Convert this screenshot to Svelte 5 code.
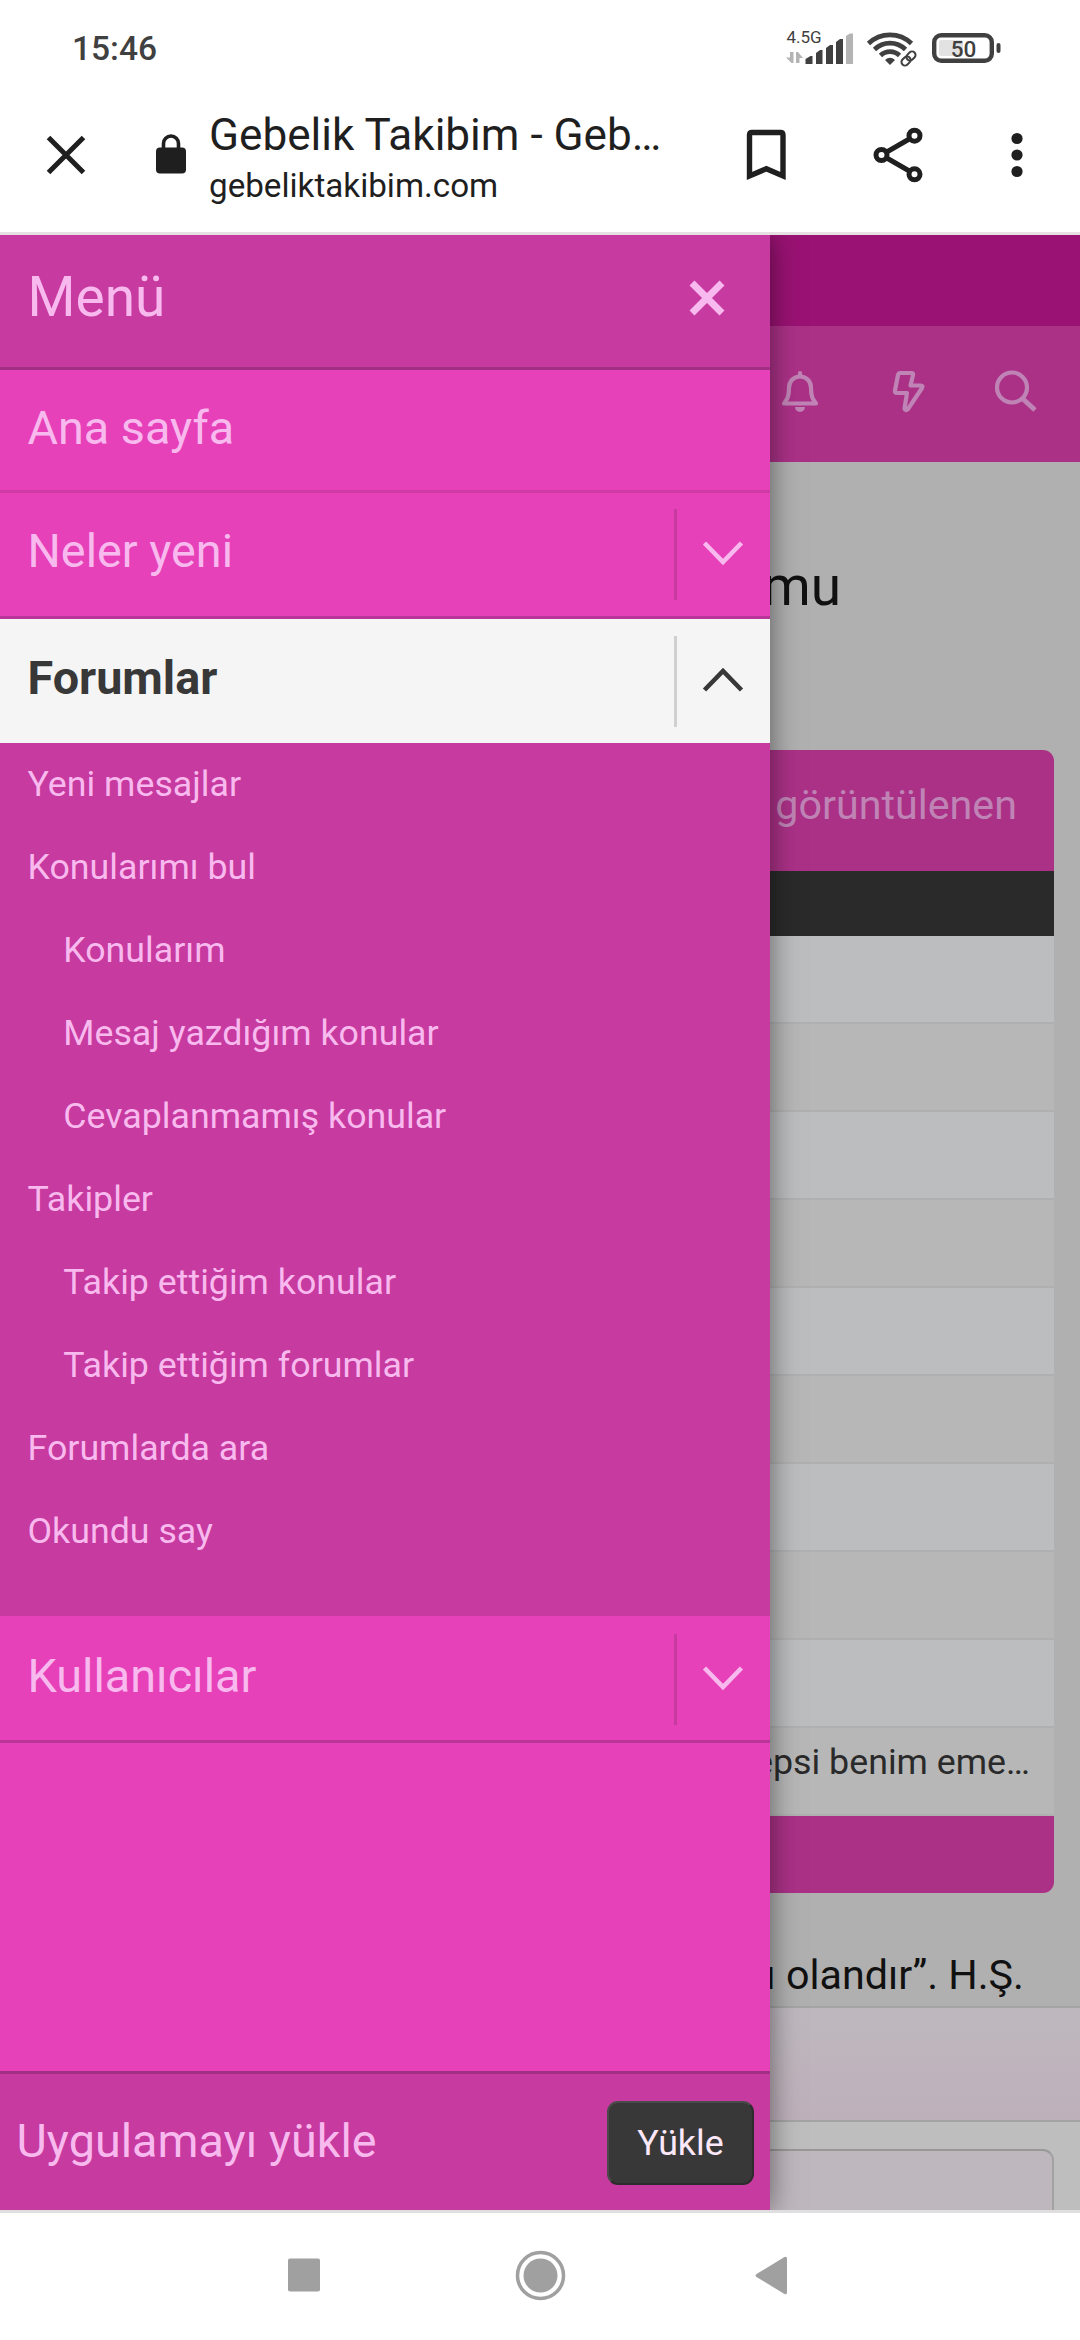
<script>
  const menuTop = [
    { label: "Ana sayfa" },
    { label: "Neler yeni", toggle: true },
    { label: "Forumlar", toggle: true, open: true },
  ];

  const subMenu = [
    { label: "Yeni mesajlar" },
    { label: "Konularımı bul" },
    { label: "Konularım", indent: true },
    { label: "Mesaj yazdığım konular", indent: true },
    { label: "Cevaplanmamış konular", indent: true },
    { label: "Takipler" },
    { label: "Takip ettiğim konular", indent: true },
    { label: "Takip ettiğim forumlar", indent: true },
    { label: "Forumlarda ara" },
    { label: "Okundu say" },
  ];

  const rows = ["", "", "", "", "", "", "", "", "", "hepsi benim eme…"];
</script>

{#snippet chevron(open)}
  <span class="toggle">
    <svg width="42" height="26" viewBox="0 0 42 26">
      <path d={open ? "M2.5 23 21 4 39.5 23" : "M2.5 3 21 22 39.5 3"} fill="none" stroke="currentColor" stroke-width="4.6" />
    </svg>
  </span>
{/snippet}

<div class="phone">
  <header class="status">
    <span class="clock">15:46</span>
    <svg class="status-icons" width="230" height="46" viewBox="780 25 230 46">
      <text x="786.5" y="43" font-size="17" fill="#404040">4.5G</text>
      <g fill="#b4b4b4">
        <path d="M790 52h3.500v11h-2l-5.500-5.500h4z" />
        <path d="M796 52h2l5 6h-3.500v5h-3.500z" />
        <path d="M846 36l4-2.500h3V64h-7z" />
      </g>
      <g fill="#404040">
        <path d="M805.500 59l5-3h2v8h-7z" />
        <path d="M816 53l4-3h2.500v14H816z" />
        <path d="M826 48l4-3h3v19h-7z" />
        <path d="M836 42l4-3h3v25h-7z" />
        <path d="M885.500 59.500a6.500 6.500 0 0 1 9 0v1L890 65l-4.500-4.500z" />
        <rect x="996.500" y="43" width="4" height="10" rx="2" />
      </g>
      <g fill="none" stroke="#404040" stroke-width="4.700">
        <path d="M868.500 43.500a31 31 0 0 1 43 0" />
        <path d="M874.500 49.500a22 22 0 0 1 31 0" />
        <path d="M880.500 55.500a13.500 13.500 0 0 1 19 0" />
      </g>
      <g transform="rotate(-45 908.5 58.5)">
        <g fill="#fff" stroke="#fff" stroke-width="5">
          <rect x="900" y="55" width="10" height="7" rx="3.500" />
          <rect x="907" y="55" width="10" height="7" rx="3.500" />
        </g>
        <g fill="none" stroke="#404040" stroke-width="2">
          <rect x="900" y="55" width="10" height="7" rx="3.500" />
          <rect x="907" y="55" width="10" height="7" rx="3.500" />
        </g>
      </g>
      <rect x="934.200" y="35.200" width="57.600" height="25.600" rx="7" fill="none" stroke="#404040" stroke-width="4.400" />
      <rect x="939" y="40" width="24" height="16" rx="2" fill="#e2e2e2" />
      <text x="963.500" y="57" font-size="22.500" font-weight="500" text-anchor="middle" fill="#404040">50</text>
    </svg>
  </header>

  <div class="toolbar">
    <svg class="tb-close" width="40" height="40" viewBox="0 0 40 40">
      <path d="M2.500 2.500l35 35M37.500 2.500l-35 35" stroke="#1f1f1f" stroke-width="5" />
    </svg>
    <svg class="tb-lock" width="30" height="40" viewBox="0 0 30 40">
      <rect y="13.500" width="30" height="26" rx="4" fill="#1f1f1f" />
      <path d="M7.500 15V9.500a7.500 7.500 0 0 1 15 0V15" fill="none" stroke="#1f1f1f" stroke-width="3.600" />
    </svg>
    <div class="tb-text">
      <div class="tb-title">Gebelik Takibim - Geb…</div>
      <div class="tb-url">gebeliktakibim.com</div>
    </div>
    <svg class="tb-icons" width="290" height="60" viewBox="740 125 290 60">
      <path d="M749.500 176V135q0-2.500 2.500-2.500h28.500q2.500 0 2.500 2.500v41l-16.700-7.200z" fill="none" stroke="#1f1f1f" stroke-width="5.400" />
      <g fill="none" stroke="#1f1f1f" stroke-width="5">
        <path d="M914.500 136l-33 19 33 19" />
        <g fill="#fff">
          <circle cx="914.500" cy="135.700" r="5.500" />
          <circle cx="881.500" cy="155" r="5.500" />
          <circle cx="914.500" cy="174.300" r="5.500" />
        </g>
      </g>
      <g fill="#1f1f1f">
        <circle cx="1017" cy="138.500" r="5.600" />
        <circle cx="1017" cy="155" r="5.600" />
        <circle cx="1017" cy="171.500" r="5.600" />
      </g>
    </svg>
  </div>

  <main>
    <div class="page">
      <div class="page-top"></div>
      <div class="page-nav">
        <svg width="260" height="46" viewBox="780 368 260 46" fill="none" stroke="#bf84b5" stroke-width="4.200" stroke-linejoin="round" stroke-linecap="round">
          <path d="M800 373v2M800 376.500c-6.500 0-11 5-11 11.500 0 9-2 11.500-5 15.500h32c-3-4-5-6.500-5-15.500 0-6.500-4.500-11.500-11-11.500z" />
          <path d="M795 407h10a5 5 0 0 1-10 0z" fill="#bf84b5" stroke="none" />
          <path d="M900 373h11.500q2 0 1.500 2l-2.500 10.500h10q3 0 1.500 2.500l-14 21q-2.500 2.500-3.500-.500l2.500-15.500h-10q-2.500 0-2-2.500l3-15.500q.500-2 2-2z" />
          <circle cx="1012" cy="387.500" r="15" />
          <path d="M1023 399l12 11" stroke-linecap="butt" stroke-width="5" />
        </svg>
      </div>
      <h1>Gebelik Forumu</h1>
      <section class="card">
        <div class="card-head">En çok görüntülenen</div>
        <div class="card-dark"></div>
        {#each rows as row}
          <div class="card-row">{row}</div>
        {/each}
        <div class="card-foot"></div>
      </section>
      <p class="quote">hayırlı olandır”. H.Ş.</p>
      <div class="band"></div>
      <div class="box-area"><div class="box"></div></div>
    </div>

    <aside class="drawer">
      <div class="menu-head">
        <span>Menü</span>
        <svg width="36" height="36" viewBox="0 0 36 36">
          <path d="M3 3l30 30M33 3L3 33" stroke="#f8b9ee" stroke-width="7" />
        </svg>
      </div>
      {#each menuTop as item}
        <div class="item" class:open={item.open} class:tall={item.toggle}>
          <span>{item.label}</span>
          {#if item.toggle}{@render chevron(item.open)}{/if}
        </div>
      {/each}
      <ul>
        {#each subMenu as sub}
          <li class:indent={sub.indent}>{sub.label}</li>
        {/each}
      </ul>
      <div class="item tall last">
        <span>Kullanıcılar</span>
        {@render chevron(false)}
      </div>
      <div class="install">
        <span>Uygulamayı yükle</span>
        <button>Yükle</button>
      </div>
    </aside>
  </main>

  <nav class="android">
    <svg width="520" height="60" viewBox="280 2245 520 60" fill="#a0a0a0">
      <rect x="288" y="2258.500" width="32" height="33" rx="2" />
      <circle cx="540.500" cy="2275.500" r="17" />
      <circle cx="540.500" cy="2275.500" r="23" fill="none" stroke="#a0a0a0" stroke-width="3.500" />
      <path d="M756.500 2274l28-17q2.500-1 2.500 2v33q0 3-2.500 2l-28-17q-2-1.500 0-3z" />
    </svg>
  </nav>
</div>

<style>
  :global(body) {
    background: #fff;
  }
  .phone {
    width: 1080px;
    height: 2340px;
    display: flex;
    flex-direction: column;
    overflow: hidden;
    font-family: Roboto, "Liberation Sans", sans-serif;
    color: #1f1f1f;
  }
  .phone * {
    box-sizing: border-box;
  }
  svg {
    display: block;
    flex: none;
  }
  .status {
    height: 98px;
    display: flex;
    justify-content: space-between;
    padding: 25px 70px 0 72px;
  }
  .clock {
    font-size: 33.5px;
    font-weight: 500;
    line-height: 48px;
    color: #404040;
  }
  .toolbar {
    height: 137px;
    display: flex;
    align-items: flex-start;
    border-bottom: 3px solid #e6dfe4;
  }
  .tb-close {
    margin: 37px 0 0 46px;
  }
  .tb-lock {
    margin: 36px 0 0 70px;
  }
  .tb-text {
    width: 530px;
    margin-left: 23px;
    white-space: nowrap;
  }
  .tb-title {
    font-size: 44.1px;
    line-height: 52px;
    margin-top: 11px;
  }
  .tb-url {
    font-size: 33.2px;
    line-height: 40px;
    margin-top: 5px;
  }
  .tb-icons {
    margin: 27px 0 0 1px;
  }
  main {
    position: relative;
    height: 1975px;
    overflow: hidden;
  }
  .page {
    height: 100%;
    background: #b0b0b0;
  }
  .page-top {
    height: 91px;
    background: #9a1273;
  }
  .page-nav {
    height: 136px;
    padding: 42px 40px 0 0;
    display: flex;
    justify-content: flex-end;
    background: #ab3187;
  }
  h1 {
    height: 288px;
    margin: 0;
    padding: 91px 239px 0 0;
    font-size: 55px;
    font-weight: 400;
    line-height: 66px;
    text-align: right;
    color: #111;
  }
  .card {
    width: 1027px;
    margin-left: 27px;
    border-radius: 11px;
    overflow: hidden;
  }
  .card-head {
    height: 121px;
    padding: 29px 37px 0 0;
    font-size: 41.25px;
    line-height: 52px;
    text-align: right;
    color: #bf84b5;
    background: #ab3187;
  }
  .card-dark {
    height: 65px;
    background: #2a2a2a;
  }
  .card-row {
    height: 88px;
    padding: 12px 24px 0 0;
    font-size: 35.75px;
    line-height: 44px;
    text-align: right;
    color: #2a2a2a;
    background: #bbbdbf;
    border-bottom: 2px solid #b0b0b0;
  }
  .card-row:nth-child(even) {
    background: #b7b7b7;
  }
  .card-foot {
    height: 77px;
    background: #ab3187;
  }
  .quote {
    height: 113px;
    margin: 0;
    padding: 54px 56px 0 0;
    font-size: 41.25px;
    line-height: 56px;
    text-align: right;
    color: #111;
  }
  .band {
    height: 116px;
    border: solid #a5a4a5;
    border-width: 2px 0;
    background: linear-gradient(#beb8be, #beb0bb);
  }
  .box-area {
    height: 100px;
    padding: 27px 26px 0;
    background: #bebebe;
  }
  .box {
    height: 100px;
    border: 2px solid #a2a2a2;
    border-top-color: #989898;
    border-radius: 11px;
    background: #beb7be;
  }
  /* slides over the page */
  .drawer {
    position: absolute;
    inset: 0 auto 0 0;
    width: 770px;
    display: flex;
    flex-direction: column;
    background: #e741b9;
    color: #f8b9ee;
    box-shadow: 0 0 27px rgba(0, 0, 0, 0.5);
  }
  .menu-head {
    height: 135px;
    display: flex;
    justify-content: space-between;
    padding: 29px 45px 0 27.5px;
    font-size: 55px;
    line-height: 66px;
    background: #c73a9f;
    border-bottom: 3px solid #a13085;
  }
  .menu-head svg {
    margin-top: 16px;
  }
  .item {
    height: 123px;
    display: flex;
    justify-content: space-between;
    padding-left: 27.5px;
    border-bottom: 3px solid #cf3aa6;
    font-size: 46.75px;
    line-height: 116px;
  }
  .item.tall {
    height: 126px;
    border-bottom-color: #b9359a;
  }
  .item.open {
    height: 124px;
    border-bottom: 0;
    line-height: 118px;
    font-weight: 700;
    color: #383838;
    background: #f5f5f5;
  }
  .item.last {
    height: 127px;
    line-height: 120px;
  }
  .toggle {
    width: 96px;
    height: 91px;
    margin-top: 16px;
    display: flex;
    align-items: flex-start;
    padding: 31px 0 0 25px;
    border-left: 3px solid #c73a9f;
  }
  .open .toggle {
    margin-top: 17px;
    border-left-color: #d0d0d0;
  }
  .last .toggle {
    margin-top: 18px;
  }
  ul {
    height: 873px;
    margin: 0;
    padding: 0;
    list-style: none;
    background: #c73a9f;
  }
  li {
    height: 83px;
    padding-left: 27.5px;
    font-size: 35.75px;
    line-height: 83px;
  }
  li.indent {
    padding-left: 63.25px;
  }
  .install {
    height: 139px;
    margin-top: auto;
    display: flex;
    align-items: center;
    justify-content: space-between;
    padding: 0 16px 0 16.5px;
    font-size: 46.75px;
    background: #c73a9f;
    border-top: 3px solid #a13085;
  }
  .install span {
    margin-top: -2px;
  }
  button {
    width: 147px;
    height: 84px;
    margin-top: 2px;
    padding: 0;
    border: 2px solid #2c2c2c;
    border-color: #4a4a4a #2c2c2c #2c2c2c #4a4a4a;
    border-radius: 11px;
    font: inherit;
    font-size: 35.75px;
    color: #fde8fa;
    background: #383838;
  }
  .android {
    height: 130px;
    padding: 32px 0 0 280px;
    border-top: 3px solid #e0dfe0;
  }
</style>
